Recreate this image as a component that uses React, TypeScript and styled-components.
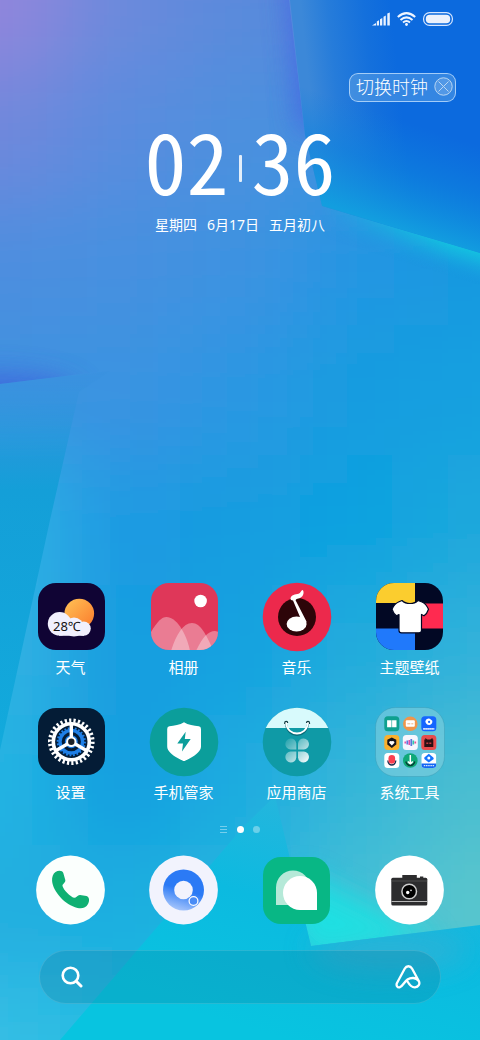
import React from 'react';
import styled, { createGlobalStyle } from 'styled-components';

const GlobalStyle = createGlobalStyle`
  *, *::before, *::after { box-sizing: border-box; }
  body {
    margin: 0;
    background: #149ee0;
    color: #fff;
    font-family: "Noto Sans", "Noto Sans CJK SC", sans-serif;
  }
  button { font: inherit; color: inherit; background: none; border: 0; padding: 0; cursor: pointer; }
`;

/* ---------- layout ---------- */

const Screen = styled.div`
  display: grid;
  grid-template: minmax(100vh, auto) / minmax(0, 1fr);
  overflow: hidden;
`;

const WallpaperArt = styled.svg`
  grid-area: 1 / 1;
  width: 100%;
  height: 100%;
  min-height: 0;
  contain: size;
`;

const Home = styled.main`
  grid-area: 1 / 1;
  z-index: 1;
  display: flex;
  flex-direction: column;
  padding-bottom: 36px;
`;

const StatusBar = styled.header`
  display: flex;
  justify-content: flex-end;
  align-items: center;
  gap: 7px;
  padding: 12px 27px 0 0;
  svg { display: block; }
`;

const ToolRow = styled.div`
  display: flex;
  justify-content: flex-end;
  padding: 47px 24px 0;
`;

const SwitchClock = styled.button`
  && {
    display: flex;
    align-items: center;
    gap: 6px;
    height: 29px;
    padding: 0 2px 2px 6px;
    border: 1px solid rgba(200, 228, 255, 0.75);
    border-radius: 9px;
    background: rgba(130, 185, 235, 0.35);
    font-size: 18px;
    line-height: 24px;
    font-weight: 300;
  }
  svg { display: block; }
`;

const Clock = styled.time`
  display: flex;
  justify-content: center;
  align-items: center;
  gap: 10px;
  margin-top: 13px;
  font-family: "Noto Sans CJK SC", sans-serif;
  font-feature-settings: "hwid";
  font-weight: 400;
  font-size: 84px;
  line-height: 88px;
`;

const ClockBar = styled.i`
  width: 3px;
  height: 27px;
  margin-top: 18px;
  border-radius: 1px;
  background: rgba(255, 255, 255, 0.85);
`;

const DateLine = styled.p`
  display: flex;
  justify-content: center;
  gap: 10px;
  margin: 12px 0 40px;
  font-size: 14px;
  line-height: 20px;
`;

const AppGrid = styled.nav`
  display: grid;
  grid-template-columns: repeat(4, 1fr);
  row-gap: 29px;
  margin-top: auto;
  padding: 0 14px;
`;

const AppButton = styled.button`
  display: flex;
  flex-direction: column;
  align-items: center;
  gap: 5px;
  && { font-size: 15px; line-height: 20px; }
  svg { display: block; }
`;

const Pager = styled.div`
  display: flex;
  justify-content: center;
  align-items: center;
  gap: 9px;
  height: 8px;
  margin: 23px 0 21px;
  svg { display: block; }
`;

const Dot = styled.span<{ $active?: boolean }>`
  width: 7px;
  height: 7px;
  border-radius: 50%;
  background: rgba(255, 255, 255, ${p => (p.$active ? 1 : 0.35)});
`;

const Dock = styled(AppGrid)`
  margin-top: 0;
`;

const SearchBar = styled.form`
  display: flex;
  align-items: center;
  height: 54px;
  margin: 25px 39px 0;
  padding: 0 19px 0 21px;
  border: 1px solid rgba(255, 255, 255, 0.13);
  border-radius: 27px;
  background: rgba(12, 100, 130, 0.2);
  svg { display: block; }
`;

const SearchInput = styled.input`
  flex: 1;
  min-width: 0;
  height: 40px;
  border: 0;
  outline: 0;
  background: none;
  color: #fff;
  font-size: 15px;
`;

/* ---------- wallpaper ---------- */

const MESH = [
  ['#9286dc', '#6c8adc', '#5a8adc', '#5488dc', '#4a84dc'],
  ['#7088dc', '#5a8cde', '#4e90de', '#3e90e0', '#2090e0'],
  ['#4e8edf', '#4690e0', '#3c92e1', '#2496e2', '#1898e0'],
  ['#3c92e0', '#3a93e1', '#2c97e2', '#189ce0', '#12a0e0'],
  ['#32b2e4', '#1e9ae2', '#169de0', '#10a2e0', '#1aa8dc'],
  ['#30b2e2', '#149de0', '#14a2e0', '#24acdc', '#30b2da'],
  ['#24b4e2', '#149ee0', '#1aace0', '#34b6d8', '#4cbed0'],
  ['#20aee0', '#1eaee0', '#22b6de', '#44c0d6', '#5ac6cc'],
  ['#34bee4', '#24bce2', '#22bce0', '#30c8dc', '#38c8dc'],
];

const Wallpaper = () => (
  <WallpaperArt viewBox="0 0 480 1040" preserveAspectRatio="none" aria-hidden="true">
    <defs>
      <filter id="soft" filterUnits="userSpaceOnUse" x="-200" y="-200" width="880" height="1440">
        <feGaussianBlur stdDeviation="42" />
      </filter>
      <filter id="glow" filterUnits="userSpaceOnUse" x="-200" y="-200" width="880" height="1440">
        <feGaussianBlur stdDeviation="14" />
      </filter>
      <clipPath id="facetTop"><path d="M290 0H480V253L322 206L305 135Z" /></clipPath>
      <clipPath id="facetBelow"><path d="M322 206L480 253V400H260Z" /></clipPath>
      <clipPath id="facetLeft"><path d="M0 0H289L305 135L314 210L130 368L0 384Z" /></clipPath>
      <clipPath id="facetSide"><path d="M0 384L110 371L79 392L50 520L0 750Z" /></clipPath>
      <clipPath id="facetBottom"><path d="M60 1040L244 826L275 796L311 946L480 925V1040Z" /></clipPath>
      <clipPath id="facetWedge"><path d="M275 796L311 946L480 925V760Z" /></clipPath>
      <linearGradient id="topFill" x1="300" y1="0" x2="390" y2="0" gradientUnits="userSpaceOnUse" gradientTransform="rotate(-6 300 0)">
        <stop offset="0" stopColor="#3c88d8" />
        <stop offset="0.3" stopColor="#267cda" />
        <stop offset="0.7" stopColor="#1470dc" />
        <stop offset="1" stopColor="#0c6ade" />
      </linearGradient>
      <linearGradient id="topCyan" x1="433" y1="130" x2="400" y2="229" gradientUnits="userSpaceOnUse">
        <stop offset="0" stopColor="#0e80de" stopOpacity="0" />
        <stop offset="0.45" stopColor="#0e84de" stopOpacity="0.6" />
        <stop offset="1" stopColor="#129edf" />
      </linearGradient>
      <linearGradient id="beam" x1="418" y1="234" x2="409" y2="264" gradientUnits="userSpaceOnUse">
        <stop offset="0" stopColor="#14c0e0" />
        <stop offset="0.3" stopColor="#16b4e0" stopOpacity="0.8" />
        <stop offset="1" stopColor="#1898e0" stopOpacity="0" />
      </linearGradient>
      <linearGradient id="beamFade" x1="322" y1="0" x2="450" y2="0" gradientUnits="userSpaceOnUse">
        <stop offset="0" stopColor="#fff" stopOpacity="0" />
        <stop offset="1" stopColor="#fff" />
      </linearGradient>
      <mask id="beamMask"><rect x="300" y="180" width="180" height="150" fill="url(#beamFade)" /></mask>
      <linearGradient id="sideFill" x1="0" y1="380" x2="0" y2="750" gradientUnits="userSpaceOnUse">
        <stop offset="0" stopColor="#3890de" />
        <stop offset="0.3" stopColor="#149fd8" />
        <stop offset="1" stopColor="#12aadc" />
      </linearGradient>
      <linearGradient id="sideFade" x1="0" y1="371" x2="0" y2="460" gradientUnits="userSpaceOnUse">
        <stop offset="0" stopColor="#fff" stopOpacity="0.3" />
        <stop offset="1" stopColor="#fff" />
      </linearGradient>
      <mask id="sideMask"><rect y="370" width="120" height="400" fill="url(#sideFade)" /></mask>
      <linearGradient id="bottomFill" x1="360" y1="790" x2="290" y2="1040" gradientUnits="userSpaceOnUse">
        <stop offset="0" stopColor="#2cb4dc" />
        <stop offset="0.5" stopColor="#0cbae0" />
        <stop offset="1" stopColor="#08c4e0" />
      </linearGradient>
    </defs>

    <g filter="url(#soft)">
      {MESH.map((row, r) =>
        row.map((color, c) => {
          const left = c === 0 ? -200 : c * 120 - 60;
          const top = r === 0 ? -200 : r * 130 - 65;
          const right = c === 4 ? 680 : c * 120 + 61;
          const bottom = r === 8 ? 1240 : r * 130 + 66;
          return <rect key={`${r}-${c}`} x={left} y={top} width={right - left} height={bottom - top} fill={color} />;
        }),
      )}
    </g>

    <g clipPath="url(#facetLeft)">
      <path d="M284 -60L330 -60L330 130L299 130Z" fill="#4664e2" opacity="0.85" filter="url(#glow)" />
      <ellipse cx="-10" cy="396" rx="90" ry="22" fill="#4062dc" opacity="0.85" filter="url(#glow)" />
    </g>

    <g clipPath="url(#facetTop)">
      <rect x="280" width="200" height="260" fill="url(#topFill)" />
      <rect x="280" width="200" height="260" fill="url(#topCyan)" />
    </g>
    <g clipPath="url(#facetBelow)">
      <rect x="300" y="180" width="180" height="150" fill="url(#beam)" mask="url(#beamMask)" />
    </g>

    <g clipPath="url(#facetSide)">
      <rect y="370" width="120" height="400" fill="url(#sideFill)" mask="url(#sideMask)" />
    </g>

    <g clipPath="url(#facetWedge)">
      <path d="M290 925L311 960L440 940L300 870Z" fill="#1ee2e2" opacity="0.9" filter="url(#glow)" />
    </g>
    <g clipPath="url(#facetBottom)">
      <rect y="780" width="480" height="260" fill="url(#bottomFill)" />
      <ellipse cx="390" cy="950" rx="80" ry="22" fill="#34b0d4" opacity="0.7" filter="url(#glow)" />
    </g>
  </WallpaperArt>
);

/* ---------- app icons ---------- */

const Tile = ({ children }: { children: React.ReactNode }) => (
  <svg width="71" height="71" viewBox="0 0 71 71" aria-hidden="true">{children}</svg>
);

const WeatherIcon = () => (
  <Tile>
    <defs>
      <linearGradient id="sun" x1="0" y1="0" x2="1" y2="1">
        <stop offset="0" stopColor="#ffc356" /><stop offset="1" stopColor="#fb7a2c" />
      </linearGradient>
    </defs>
    <rect x="3" y="2" width="67" height="67" rx="18" fill="#100434" />
    <circle cx="44.3" cy="32.5" r="14.8" fill="url(#sun)" />
    <g fill="#f1f0fd">
      <circle cx="24.6" cy="42.8" r="11.8" />
      <circle cx="39" cy="46" r="9.6" />
      <circle cx="48.6" cy="47.6" r="7.2" />
      <rect x="24" y="44" width="25" height="10.8" />
    </g>
    <text x="18" y="50" fontSize="13" fill="#111" fontFamily='"Noto Sans", "Noto Sans CJK SC", sans-serif'>28℃</text>
  </Tile>
);

const GalleryIcon = () => (
  <Tile>
    <clipPath id="galleryClip"><rect x="3" y="2" width="67" height="67" rx="18" /></clipPath>
    <g clipPath="url(#galleryClip)">
      <rect x="3" y="2" width="67" height="67" fill="#df3759" />
      <circle cx="52.6" cy="20" r="6.3" fill="#fff" />
      <g fill="#fff" fillOpacity="0.35">
        <path d="M0 56C8 42 13 36 18.5 36C28 36 38 51 42 70H0Z" />
        <path d="M23 70C28 54 35 42 44 42C53 42 58 54 66 70Z" />
        <path d="M48 70C54 57 60 50 67 50L74 52V70Z" />
      </g>
    </g>
  </Tile>
);

const MusicIcon = () => (
  <Tile>
    <circle cx="36" cy="36" r="34.3" fill="#ec294c" />
    <circle cx="36" cy="36" r="19" fill="#2d0509" />
    <ellipse cx="35.6" cy="43" rx="10" ry="7.6" fill="#fff" />
    <path d="M29.5 17.5C30 13.5 34.5 13.6 37.5 12.8C39.8 12 40 9.5 41.3 9C42.8 9 43.2 13 41.3 15.3C39 18 35.6 17.3 34.6 19.2L45.5 40.5L44.3 46L40.5 39.5L32 19.5C30.5 19.5 29.4 18.7 29.5 17.5Z" fill="#fff" />
  </Tile>
);

const ThemeIcon = () => (
  <Tile>
    <clipPath id="themeClip"><rect x="2" y="2" width="67" height="67" rx="18" /></clipPath>
    <g clipPath="url(#themeClip)">
      <rect width="71" height="71" fill="#020824" />
      <rect width="41" height="22" fill="#fbcd2e" />
      <rect x="41" y="22.5" width="30" height="25" fill="#ff2a50" />
      <rect y="47.5" width="41" height="24" fill="#2079fb" />
      <path d="M28 19.5C32 23.5 40 23.5 44 19.5L48 21C51.5 22.5 53.5 26 54.5 28.3C53.5 31.5 52 33.5 50 34.8L47.5 33.5V49.5Q47.5 51.8 45 51.8H27.5Q25 51.8 25 49.5V33.5L22.5 34.8C20.5 33.5 19 31.5 18 28.3C19 26 21 22.5 24.5 21Z" fill="#fff" stroke="#020824" strokeWidth="1.2" strokeLinejoin="round" />
    </g>
  </Tile>
);

const SettingsIcon = () => (
  <Tile>
    <rect x="3" y="2" width="67" height="67" rx="18" fill="#041c36" />
    <g transform="translate(36.3 35.7)" fill="none">
      <circle r="11.3" stroke="#1f7fe6" strokeWidth="3.4" />
      <circle r="13.6" stroke="#1f7fe6" strokeWidth="2" pathLength="96" strokeDasharray="2 2" />
      <circle r="5.5" stroke="#1f7fe6" strokeWidth="2" />
      <circle r="18" stroke="#fff" strokeWidth="3.6" />
      <circle r="21.3" stroke="#fff" strokeWidth="4" pathLength="120" strokeDasharray="2 2" />
      <path d="M0 0V-18M0 0L-15.6 9M0 0L15.6 9" stroke="#fff" strokeWidth="3.4" />
      <circle r="4.2" fill="#1d2228" stroke="#fff" strokeWidth="2" />
    </g>
  </Tile>
);

const ManagerIcon = () => (
  <Tile>
    <circle cx="36" cy="36" r="34.3" fill="#0b9e9b" />
    <path d="M36 16.3C40 18.8 46 20 50.8 20.2Q53 20.5 53 23V40.5C53 45 48 49 42 52.2Q37 55 36 55Q35 55 30 52.2C24 49 19.2 45 19.2 40.5V23Q19.2 20.5 21.4 20.2C26 20 32 18.8 36 16.3Z" fill="#fff" />
    <path d="M37.7 25.7L29.3 37.5H35L34 45.5L42.7 33H36.8Z" fill="#0b9e9b" />
  </Tile>
);

const StoreIcon = () => (
  <Tile>
    <defs>
      <linearGradient id="petal" x1="24" y1="32" x2="48" y2="57" gradientUnits="userSpaceOnUse">
        <stop offset="0" stopColor="#fff" stopOpacity="0.05" /><stop offset="1" stopColor="#fff" />
      </linearGradient>
    </defs>
    <clipPath id="storeClip"><circle cx="36" cy="36" r="34.3" /></clipPath>
    <g clipPath="url(#storeClip)">
      <rect width="71" height="71" fill="#0f9aa6" />
      <rect width="71" height="22" fill="#d8fafc" />
    </g>
    <path d="M25 18C26.5 32.5 45.5 32.5 47 18" fill="none" stroke="#0a6c78" strokeWidth="2" />
    <path d="M25 17C26.5 31 45.5 31 47 17" fill="none" stroke="#fff" strokeWidth="1.8" strokeLinecap="round" />
    <path d="M23.7 18V17Q23.7 15.3 25.2 15.3T26.7 17M45.5 17Q45.5 15.3 47 15.3T48.5 17V18" fill="none" stroke="#123a40" strokeWidth="1.2" />
    <g fill="url(#petal)">
      <path d="M35.3 43.5H29.5A5.5 5.5 0 1 1 35.3 37.5Z" />
      <path d="M37 43.5V37.5A5.5 5.5 0 1 1 42.8 43.5Z" />
      <path d="M35.3 45.5V51.5A5.5 5.5 0 1 1 29.5 45.5Z" />
      <path d="M37 45.5H42.8A5.5 5.5 0 1 1 37 51.5Z" />
    </g>
  </Tile>
);

const FolderIcon = () => (
  <Tile>
    <rect x="1.5" y="1.5" width="69" height="69" rx="20" fill="#a5dbe4" fillOpacity="0.4" stroke="#338fa8" strokeOpacity="0.35" />
    <g transform="translate(10.3 10.3)">
      <rect width="15" height="15" rx="3.5" fill="#0fa08f" />
      <path d="M2.8 4H7.2V11H2.8ZM7.8 4H12.2V11H7.8Z" fill="#fff" />
      <circle cx="26" cy="7.5" r="7.3" fill="#ef964c" />
      <rect x="21.5" y="4" width="9" height="6.5" rx="1" fill="#fff" />
      <path d="M23 7.5H26M27 7.5H29" stroke="#f0a060" strokeWidth="0.8" />
      <rect x="37" width="15" height="15" rx="3.5" fill="#1565ff" />
      <path d="M41 5Q42 1.5 45.5 2.5L48 4.5Q48.5 8 45 8.8Q41.5 8.5 41 5Z" fill="#fff" />
      <circle cx="44.8" cy="5.6" r="1.1" fill="#1565ff" />
      <path d="M39 12.5H50" stroke="#fff" strokeWidth="1.8" strokeDasharray="1.5 0.5" />
    </g>
    <g transform="translate(10.3 29)">
      <rect width="15" height="15" rx="3.5" fill="#fbb02c" />
      <path d="M7.5 2.5L12 4.7V9.5L7.5 13L3 9.5V4.7Z" fill="#15151c" />
      <path d="M7.5 10.5L4.8 7.8Q5 5.5 7.5 6.3Q10 5.5 10.2 7.8Z" fill="#fff" />
      <rect x="18.5" width="15" height="15" rx="3.5" fill="#f6f6fe" />
      <path d="M21 6.5V8.5M25 5V10" stroke="#e650a8" strokeWidth="1.7" />
      <path d="M23 5.5V9.5M27 4V11" stroke="#5a78dc" strokeWidth="1.7" />
      <path d="M29 5.500V9.5" stroke="#2cc7ae" strokeWidth="1.7" />
      <path d="M31 6.5V8.5" stroke="#e65090" strokeWidth="1.7" />
      <rect x="37" width="15" height="15" rx="3.5" fill="#e64b4c" />
      <path d="M41 3L43 4.5H46L48 3L48.5 4.5H49V12H40V4.5H41Z" fill="#2b1014" />
      <path d="M42 8.3H44M45 8.3H47" stroke="#c53b40" strokeWidth="1.4" />
    </g>
    <g transform="translate(10.3 47)">
      <rect width="15" height="15" rx="3.5" fill="#fff" />
      <path d="M3.5 7.5Q4 12 7.5 12T11.5 7.5" fill="none" stroke="#203050" strokeWidth="1.3" />
      <rect x="4.2" y="2" width="6.6" height="8.8" rx="3.3" fill="#fa4050" />
      <circle cx="26" cy="7.5" r="7.3" fill="#0fa878" />
      <path d="M26 2V11M23.5 8.5L26 11L28.5 8.5" stroke="#fff" strokeWidth="1.5" fill="none" />
      <path d="M21.5 8.5Q22.5 12.5 26 12.5T30.5 8.5" stroke="#083c34" strokeWidth="1.3" fill="none" />
      <clipPath id="miniClip"><rect x="37" width="15" height="15" rx="3.5" /></clipPath>
      <g clipPath="url(#miniClip)">
        <rect x="37" width="15" height="15" fill="#fff" />
        <rect x="37" y="10.5" width="15" height="5" fill="#1468f4" />
      </g>
      <path d="M40 4.5L44.5 0.8L49 4.5L49.5 6L44.5 9.5L40 6Z" fill="#1474ff" />
      <circle cx="44.5" cy="5" r="1.5" fill="#fff" />
      <path d="M39.5 12.7H50" stroke="#fff" strokeDasharray="1.5 0.7" />
    </g>
  </Tile>
);

const PhoneIcon = () => (
  <Tile>
    <circle cx="35.5" cy="36" r="34.4" fill="#fbfffd" />
    <path d="M20.5 18C23.5 16 27.5 16.4 28.3 19L30.3 26C30.8 28.5 27.2 30 27.5 32C28.5 36 35.5 42.8 39 43.8C41 44.3 42.5 40.8 45 41L51.5 42C54.5 43 54.8 46.8 53 50C51 53.8 47 54.9 42.5 53.9C30 51 18 37.5 17.1 27C16.8 23 18 19.8 20.5 18Z" fill="#0fb072" />
  </Tile>
);

const BrowserIcon = () => (
  <Tile>
    <defs>
      <linearGradient id="ring" x1="0.65" y1="0" x2="0.35" y2="1">
        <stop offset="0.5" stopColor="#2b7af5" /><stop offset="1" stopColor="#a9c7fb" />
      </linearGradient>
    </defs>
    <circle cx="35.5" cy="36" r="34.4" fill="#f2f3fd" />
    <circle cx="35.5" cy="36" r="20.5" fill="url(#ring)" />
    <circle cx="35.5" cy="36" r="9.3" fill="#f2f3fd" />
    <circle cx="45.5" cy="47" r="4.4" fill="#4a8cf6" stroke="#fff" strokeWidth="1.2" />
  </Tile>
);

const MessageIcon = () => (
  <Tile>
    <rect x="2" y="3" width="67" height="67" rx="18" fill="#08b785" />
    <path d="M15 51V33.5A17 17 0 0 1 49 33.5A17 17 0 0 1 32 51Z" fill="#b5e9d8" />
    <path d="M56 56V39A17 17 0 1 0 39 56Z" fill="#fff" />
  </Tile>
);

const CameraIcon = () => (
  <Tile>
    <circle cx="35.5" cy="36" r="34.4" fill="#fff" />
    <g fill="#2c2c2e">
      <rect x="28.3" y="21" width="14.5" height="4" />
      <rect x="46" y="22.5" width="3.3" height="2" />
      <rect x="17.3" y="23.7" width="36" height="27.7" rx="1.5" />
    </g>
    <path d="M17.5 27H53.2" stroke="#555" strokeWidth="0.8" />
    <path d="M17.5 47.5H53.2" stroke="#b8b8b8" />
    <circle cx="35.2" cy="37.5" r="7.3" fill="#000" stroke="#ccc" strokeWidth="1.5" />
    <circle cx="33.7" cy="38.5" r="1.7" fill="#fff" />
    <circle cx="37" cy="36.3" r="0.9" fill="#ddd" />
  </Tile>
);

const APPS = [
  { name: '天气', Icon: WeatherIcon },
  { name: '相册', Icon: GalleryIcon },
  { name: '音乐', Icon: MusicIcon },
  { name: '主题壁纸', Icon: ThemeIcon },
  { name: '设置', Icon: SettingsIcon },
  { name: '手机管家', Icon: ManagerIcon },
  { name: '应用商店', Icon: StoreIcon },
  { name: '系统工具', Icon: FolderIcon },
];

const DOCK = [
  { name: '电话', Icon: PhoneIcon },
  { name: '浏览器', Icon: BrowserIcon },
  { name: '信息', Icon: MessageIcon },
  { name: '相机', Icon: CameraIcon },
];

export default function App() {
  return (
    <Screen>
      <GlobalStyle />
      <Wallpaper />
      <Home>
        <StatusBar>
          <svg width="18" height="14" viewBox="0 0 18 14" fill="#e9f2ff" aria-hidden="true">
            <path d="M0 13.5L4 11V13.5ZM4.8 9.5L7 8.3V13.5H4.8ZM8 7.3L10.3 6V13.5H8ZM11.5 4.8L13.8 3.6V13.5H11.5ZM15.3 1.5L17.8 0.5V13.5H15.3Z" />
          </svg>
          <svg width="19" height="14" viewBox="0 0 19 14" fill="none" stroke="#eef5ff" strokeWidth="2" aria-hidden="true">
            <path d="M0.8 5Q9.5 -2.8 18.2 5M3.5 8Q9.5 2.7 15.5 8M6 10.5Q9.5 7.6 13 10.5" />
            <circle cx="9.5" cy="12.5" r="1.4" fill="#eef5ff" stroke="none" />
          </svg>
          <svg width="30" height="14" viewBox="0 0 30 14" aria-hidden="true">
            <rect x="0.6" y="0.6" width="28.8" height="12.8" rx="6" fill="none" stroke="#d6e6ff" strokeWidth="1.2" />
            <rect x="2.8" y="2.8" width="24.4" height="8.4" rx="4" fill="#ebf1fc" />
          </svg>
        </StatusBar>

        <ToolRow>
          <SwitchClock type="button">
            切换时钟
            <svg width="19" height="19" viewBox="0 0 19 19" fill="none" stroke="#b9d6f2" aria-hidden="true">
              <circle cx="9.5" cy="9.5" r="8.7" fill="#fff" fillOpacity="0.15" />
              <path d="M4.5 4.5L14.5 14.5M14.5 4.5L4.5 14.5" />
            </svg>
          </SwitchClock>
        </ToolRow>

        <Clock dateTime="02:36">
          <span>02</span>
          <ClockBar />
          <span>36</span>
        </Clock>
        <DateLine>
          <span>星期四</span>
          <span>6月17日</span>
          <span>五月初八</span>
        </DateLine>

        <AppGrid aria-label="应用">
          {APPS.map(({ name, Icon }) => (
            <AppButton key={name} type="button">
              <Icon />
              {name}
            </AppButton>
          ))}
        </AppGrid>

        <Pager>
          <svg width="8" height="8" viewBox="0 0 8 8" stroke="#fff" strokeOpacity="0.4" aria-hidden="true">
            <path d="M0 1.5H7M0 4.5H7M0 7.5H7" />
          </svg>
          <Dot $active />
          <Dot />
        </Pager>

        <Dock aria-label="常用应用">
          {DOCK.map(({ name, Icon }) => (
            <AppButton key={name} type="button" aria-label={name}>
              <Icon />
            </AppButton>
          ))}
        </Dock>

        <SearchBar role="search">
          <svg width="22" height="22" viewBox="0 0 22 22" fill="none" stroke="#fff" strokeWidth="2.6" strokeLinecap="round" aria-hidden="true">
            <circle cx="9.5" cy="9.5" r="7.8" />
            <path d="M15.5 15.5L20 20" strokeWidth="3" />
          </svg>
          <SearchInput type="search" aria-label="搜索" />
          <svg width="26" height="26" viewBox="0 0 26 26" fill="none" stroke="#fff" strokeWidth="2.3" strokeLinecap="round" strokeLinejoin="round" aria-hidden="true">
            <path d="M12.5 17.5C14.5 21 17 23.5 20 23.3C23.5 23 25.3 20 23.8 17L17 4.5C15.3 1.5 11.5 1.5 9.8 4.5L2 19C0.8 21.5 2.5 24 4.8 23.3C8 22 9 18 12.5 15.5C15.5 13.5 21 13 23.8 17" />
          </svg>
        </SearchBar>
      </Home>
    </Screen>
  );
}
